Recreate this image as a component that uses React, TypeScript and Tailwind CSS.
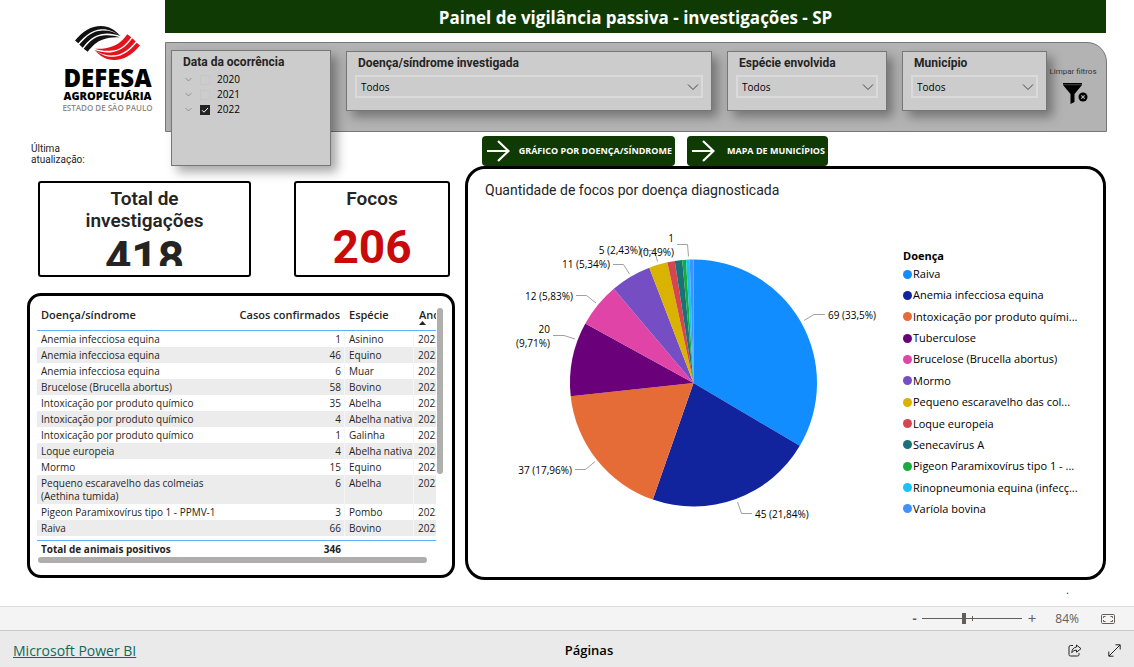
import React, { useState } from "react";

type Slice = { name: string; label: string; value: number; color: string };

const slices: Slice[] = [
  { name: "Raiva", label: "Raiva", value: 69, color: "#118DFF" },
  { name: "Anemia", label: "Anemia infecciosa equina", value: 45, color: "#12239E" },
  { name: "Intoxicação", label: "Intoxicação por produto quími...", value: 37, color: "#E66C37" },
  { name: "Tuberculose", label: "Tuberculose", value: 20, color: "#6B007B" },
  { name: "Brucelose", label: "Brucelose (Brucella abortus)", value: 12, color: "#E044A7" },
  { name: "Mormo", label: "Mormo", value: 11, color: "#744EC2" },
  { name: "Escaravelho", label: "Pequeno escaravelho das col...", value: 5, color: "#D9B300" },
  { name: "Loque", label: "Loque europeia", value: 2, color: "#D64550" },
  { name: "Senecavírus", label: "Senecavírus A", value: 2, color: "#197278" },
  { name: "Pigeon", label: "Pigeon Paramixovírus tipo 1 - ...", value: 1, color: "#1AAB40" },
  { name: "Rinopneumonia", label: "Rinopneumonia equina (infecç...", value: 1, color: "#15C6F4" },
  { name: "Varíola", label: "Varíola bovina", value: 1, color: "#4092FF" },
];

const rows: [string, number, string][] = [
  ["Anemia infecciosa equina", 1, "Asinino"],
  ["Anemia infecciosa equina", 46, "Equino"],
  ["Anemia infecciosa equina", 6, "Muar"],
  ["Brucelose (Brucella abortus)", 58, "Bovino"],
  ["Intoxicação por produto químico", 35, "Abelha"],
  ["Intoxicação por produto químico", 4, "Abelha nativa"],
  ["Intoxicação por produto químico", 1, "Galinha"],
  ["Loque europeia", 4, "Abelha nativa"],
  ["Mormo", 15, "Equino"],
  ["Pequeno escaravelho das colmeias (Aethina tumida)", 6, "Abelha"],
  ["Pigeon Paramixovírus tipo 1 - PPMV-1", 3, "Pombo"],
  ["Raiva", 66, "Bovino"],
];

function Chevron({ className }: { className: string }) {
  return (
    <svg viewBox="0 0 12 8" className={className} fill="none" stroke="currentColor" strokeWidth="1" aria-hidden="true">
      <path d="M1 1.5 6 6.5 11 1.5" />
    </svg>
  );
}

function Logo() {
  const stripes = (
    <>
      <path d="M0 14.500C8 5 16 0 26 0c8 0 14 4 19 9.500-7-4.500-12-6.800-19-6.300C17 4 10 9.500 3.300 17.300Z" />
      <path d="M4.300 18.500C12 9.500 18 5.200 26 4.700c8-.5 14 1.500 20 5.500-7-2.500-13-3.500-19-2.300-8 1.500-13.500 6-19.300 13.800Z" />
      <path d="M8.700 22.800C15 14.500 20 10.200 28 9.400c6-.6 12 0 17 1.800-7-.3-12 .3-17 2.300-7 2.500-10.500 6.200-15.300 12.300Z" />
    </>
  );
  return (
    <div className="flex flex-col items-center">
      <svg viewBox="0 0 65 34" className="h-[34px] w-[65px]" aria-hidden="true">
        <g fill="#111111">{stripes}</g>
        <g fill="#e2131d" transform="rotate(180 32.500 17)">{stripes}</g>
      </svg>
      <p className="mt-[5px] text-[24px] leading-[25px] font-extrabold text-black">DEFESA</p>
      <p className="text-[11px] leading-[12px] font-extrabold whitespace-nowrap text-black">AGROPECUÁRIA</p>
      <p className="text-[8px] leading-[11px] font-semibold whitespace-nowrap text-[#8a8a8a]">ESTADO DE SÃO PAULO</p>
    </div>
  );
}

const cardClass =
  "border border-[#777777] bg-[#cccccc] shadow-[6px_6px_10px_rgba(0,0,0,0.35)]";
const cardTitle = "font-[Roboto,sans-serif] text-[12px] leading-4 font-bold text-[#252423]";

function FilterCard({ id, title }: { id: string; title: string }) {
  return (
    <div className={`${cardClass} mt-px px-2 pt-[3px] pb-3`}>
      <label htmlFor={id} className={`${cardTitle} block px-[3px]`}>{title}</label>
      <div className="relative mt-1">
        <select
          id={id}
          className="block h-[23px] w-full appearance-none border-2 border-[#dadada] bg-transparent px-1 pt-px text-[10px] text-black"
        >
          <option>Todos</option>
        </select>
        <Chevron className="pointer-events-none absolute top-2 right-1 h-2 w-3 text-[#444444]" />
      </div>
    </div>
  );
}

function YearFilter() {
  const [checked, setChecked] = useState<Record<string, boolean>>({ "2022": true });
  return (
    <div role="group" aria-labelledby="data-titulo" className={`${cardClass} relative z-10 h-[116px] px-[11px] pt-[3px]`}>
      <p id="data-titulo" className={`${cardTitle} whitespace-nowrap`}>Data da ocorrência</p>
      <ul className="mt-[2px]">
        {["2020", "2021", "2022"].map((y) => (
          <li key={y} className="flex h-[15px] items-center">
            <button type="button" aria-label={`Expandir ${y}`} className="mr-2 ml-[2px]">
              <Chevron className="h-[5px] w-[7px] text-[#666666]" />
            </button>
            <label className="flex items-center gap-[7px] text-[10px] leading-[15px] text-black">
              <span className="relative flex size-[10px]">
                <input
                  type="checkbox"
                  checked={!!checked[y]}
                  onChange={() => setChecked({ ...checked, [y]: !checked[y] })}
                  className="size-[10px] appearance-none border border-[#c6c6c6] checked:border-[#252423] checked:bg-[#252423]"
                />
                {checked[y] && (
                  <svg viewBox="0 0 10 10" className="pointer-events-none absolute inset-0 size-[10px]" fill="none" stroke="#ffffff">
                    <path d="M2 5.200 4 7.200 8 3" />
                  </svg>
                )}
              </span>
              {y}
            </label>
          </li>
        ))}
      </ul>
    </div>
  );
}

function TabButton({ children, className }: { children: React.ReactNode; className: string }) {
  return (
    <button
      type="button"
      className={`${className} flex h-[30px] items-center justify-between rounded-[4px] bg-[#0f3a04] pr-[3px] pl-[5px] text-[9px] font-bold whitespace-nowrap text-white`}
    >
      <svg viewBox="0 0 23 22" className="h-[22px] w-[23px] shrink-0" fill="none" stroke="currentColor" strokeWidth="2.200" aria-hidden="true">
        <path d="M0 11h21M11 1l10.500 10L11 21" />
      </svg>
      {children}
    </button>
  );
}

function PieChart() {
  const cx = 208.5;
  const cy = 163;
  const r = 123.5;
  const total = slices.reduce((s, d) => s + d.value, 0);
  let acc = 0;
  const point = (v: number) => {
    const a = (v / total) * Math.PI * 2;
    return `${(cx + r * Math.sin(a)).toFixed(2)} ${(cy - r * Math.cos(a)).toFixed(2)}`;
  };
  return (
    <svg viewBox="0 0 410 330" className="h-auto w-[410px]" role="img" aria-label="Quantidade de focos por doença">
      {slices.map((s) => {
        const from = acc;
        acc += s.value;
        return (
          <path key={s.name} fill={s.color} d={`M${cx} ${cy}L${point(from)}A${r} ${r} 0 0 1 ${point(acc)}Z`} />
        );
      })}
      <g fill="none" stroke="#a0a0a0" strokeWidth="1">
        <path d="M319 100.500 329 94.500H340" />
        <path d="M252.500 282 256.500 293.500H267" />
        <path d="M110 241.500 100.500 249.500H90" />
        <path d="M90 119 79 115.500H68" />
        <path d="M111 83 101.500 75.500H91" />
        <path d="M144.500 54 138.500 44.500H128" />
        <path d="M172.500 41.500 169.500 30.500H158" />
        <path d="M203.500 36.500 202.500 24.500H192" />
      </g>
      <g fill="#000000" fontSize="10">
        <text x="343" y="99">69 (33,5%)</text>
        <text x="270" y="298">45 (21,84%)</text>
        <text x="87" y="254" textAnchor="end">37 (17,96%)</text>
        <text x="65" y="113" textAnchor="end">20</text>
        <text x="65" y="127" textAnchor="end">(9,71%)</text>
        <text x="88" y="80" textAnchor="end">12 (5,83%)</text>
        <text x="125" y="48" textAnchor="end">11 (5,34%)</text>
        <text x="156" y="34" textAnchor="end">5 (2,43%)</text>
        <text x="189" y="22" textAnchor="end">1</text>
        <text x="189" y="36" textAnchor="end">(0,49%)</text>
      </g>
    </svg>
  );
}

const headCell = "border-b border-[#5fb0ff] pt-1 font-semibold";

function CasesTable() {
  return (
    <div className="flex h-[285px] flex-col rounded-[14px] border-[3px] border-black pt-2 pr-[9px] pl-[7px]">
      <div className="relative overflow-hidden pr-[7px]">
        <div className="overflow-hidden">
          <table className="w-[450px] table-fixed border-separate border-spacing-0 text-left text-[10px] leading-[13px] text-[#252423]">
            <colgroup>
              <col className="w-[186px]" />
              <col className="w-[121px]" />
              <col className="w-[70px]" />
              <col className="w-[73px]" />
            </colgroup>
            <thead>
              <tr className="h-[27px] align-top text-[11px]">
                <th className={`${headCell} pl-1`}>Doença/síndrome</th>
                <th className={`${headCell} pr-1 text-right whitespace-nowrap`}>Casos confirmados</th>
                <th className={`${headCell} pl-[5px]`}>Espécie</th>
                <th className={`${headCell} pl-[5px]`} aria-sort="ascending">
                  Ano
                  <svg viewBox="0 0 7 4" className="h-1 w-[7px]" aria-hidden="true">
                    <path d="M0 4 3.500 0 7 4Z" fill="#252423" />
                  </svg>
                </th>
              </tr>
            </thead>
            <tbody>
              {rows.map(([d, n, e], i) => (
                <tr key={i} className="h-4 align-top even:bg-[#ececec]">
                  <td className="pt-[2px] pb-px pl-1">{d}</td>
                  <td className="pt-[2px] pr-[3px] text-right">{n}</td>
                  <td className="border-x border-[#f6f6f6] pt-[2px] pl-1 whitespace-nowrap">{e}</td>
                  <td className="pt-[2px] pl-1">2022</td>
                </tr>
              ))}
            </tbody>
            <tfoot>
              <tr className="h-1">
                <td colSpan={4} />
              </tr>
              <tr className="h-[17px] font-bold">
                <td className="border-t border-[#5fb0ff] pl-1">Total de animais positivos</td>
                <td className="border-t border-[#5fb0ff] pr-[3px] text-right">346</td>
                <td className="border-t border-[#5fb0ff]" />
                <td className="border-t border-[#5fb0ff]" />
              </tr>
            </tfoot>
          </table>
        </div>
        <div className="absolute top-1 right-0 h-[166px] w-[6px] rounded-full bg-[#b0aeac]" />
      </div>
      <div className="mr-4 ml-px h-[6px] rounded-full bg-[#b0aeac]" />
    </div>
  );
}

export default function App() {
  const [zoom, setZoom] = useState(42);
  return (
    <div className="flex min-h-screen flex-col bg-white font-['Open_Sans','Noto_Sans',sans-serif] text-[#252423]">
      <header className="flex pr-[27px]">
        <div className="w-[165px] shrink-0 pt-[26px] pl-[50px]">
          <Logo />
        </div>
        <div className="min-w-0 flex-1">
          <h1 className="mr-px flex h-[33px] items-center justify-center bg-[#0f3a04] pt-[2px] text-[17px] font-bold text-white">
            Painel de vigilância passiva - investigações - SP
          </h1>
          <div className="mt-[9px] grid h-[90px] grid-cols-[160fr_366fr_160fr_145fr_38fr] items-start gap-x-[15px] rounded-tr-[20px] border border-[#777777] bg-[#b3b3b3] pt-[7px] pr-[6px] pl-[5px]">
            <YearFilter />
            <FilterCard id="doenca" title="Doença/síndrome investigada" />
            <FilterCard id="especie" title="Espécie envolvida" />
            <FilterCard id="municipio" title="Município" />
            <button type="button" className="-ml-4 flex flex-col items-center gap-[5px] pt-4 text-[8px] leading-[12px] whitespace-nowrap text-[#333333]">
              <span className="font-[Roboto,sans-serif]">Limpar filtros</span>
              <svg viewBox="0 0 26 21" className="ml-1 h-[21px] w-[26px]" aria-hidden="true">
                <path d="M1 0h19v2l-7.500 9v8l-4 2V11L1 2Z" fill="#000000" />
                <path d="M1 1.700h19" stroke="#777777" strokeWidth=".6" />
                <circle cx="21" cy="14" r="4.500" fill="#000000" />
                <path d="m19.300 12.300 3.400 3.400m0-3.400-3.400 3.400" stroke="#b3b3b3" strokeWidth="1.200" />
              </svg>
            </button>
          </div>
        </div>
      </header>

      <main className="grid grid-cols-[428fr_641fr] gap-x-[10px] pr-7 pl-[27px]">
        <section className="min-w-0">
          <p className="h-[49px] w-[66px] pt-[11px] pl-1 font-[Roboto,sans-serif] text-[10px] leading-[11px]">
            Última atualização:
          </p>
          <div className="grid grid-cols-[213fr_156fr] gap-x-[43px] pr-[5px] pl-[11px] text-center font-[Roboto,sans-serif]">
            <div className="h-24 rounded-[3px] border-2 border-black pt-[5px]">
              <h2 className="text-[19px] leading-[22px] font-semibold">
                Total de
                <br />
                investigações
              </h2>
              <p className="mt-2 flex h-[26px] items-start justify-center overflow-hidden text-[46px] leading-[36px] font-bold">418</p>
            </div>
            <div className="h-24 rounded-[3px] border-2 border-black pt-[5px]">
              <h2 className="text-[19px] leading-[22px] font-semibold">Focos</h2>
              <p className="mt-3 text-[46px] leading-[50px] font-bold text-[#c80a0a]">206</p>
            </div>
          </div>
          <div className="mt-4">
            <CasesTable />
          </div>
        </section>

        <section className="min-w-0 pt-1">
          <nav className="flex gap-3 pl-[17px]">
            <TabButton className="w-[193px]">GRÁFICO POR DOENÇA/SÍNDROME</TabButton>
            <TabButton className="w-[141px]">MAPA DE MUNICÍPIOS</TabButton>
          </nav>
          <div className="h-[414px] rounded-[20px] border-[3px] border-black pt-[11px] pl-[17px]">
            <h2 className="font-[Roboto,sans-serif] text-[14px] leading-5">Quantidade de focos por doença diagnosticada</h2>
            <div className="mt-5 flex items-start gap-2">
              <PieChart />
              <div className="pt-7 text-[11px] leading-4 whitespace-nowrap text-black">
                <h3 className="font-bold">Doença</h3>
                <ul className="mt-[2px] flex h-[251px] flex-col justify-between">
                  {slices.map((s) => (
                    <li key={s.name} className="flex items-center gap-px">
                      <svg viewBox="0 0 9 9" className="size-[9px]" aria-hidden="true">
                        <circle cx="4.500" cy="4.500" r="4.500" fill={s.color} />
                      </svg>
                      {s.label}
                    </li>
                  ))}
                </ul>
              </div>
            </div>
          </div>
        </section>
      </main>

      <p className="mt-auto pr-[65px] text-right text-[10px] leading-[18px]">.</p>

      <div className="mt-[7px] flex h-6 items-center justify-end border-t border-[#dcdcdc] bg-[#f4f4f4] pr-[19px] text-[#605e5c]">
        <button type="button" aria-label="Reduzir" className="mr-[5px] text-[13px] font-bold">-</button>
        <div className="relative flex w-[100px] items-center">
          <input
            type="range"
            aria-label="Zoom"
            value={zoom}
            onChange={(e) => setZoom(Number(e.target.value))}
            className="h-3 w-full appearance-none bg-transparent [&::-webkit-slider-runnable-track]:h-px [&::-webkit-slider-runnable-track]:bg-[#605e5c] [&::-webkit-slider-thumb]:-mt-[5px] [&::-webkit-slider-thumb]:h-[11px] [&::-webkit-slider-thumb]:w-1 [&::-webkit-slider-thumb]:appearance-none [&::-webkit-slider-thumb]:bg-[#605e5c]"
          />
          <span className="pointer-events-none absolute left-1/2 h-[5px] w-px bg-[#605e5c]" />
        </div>
        <button type="button" aria-label="Ampliar" className="ml-[6px] text-[15px]">+</button>
        <span className="ml-[19px] text-[12px]">84%</span>
        <button type="button" aria-label="Ajustar à página" className="ml-[22px]">
          <svg viewBox="0 0 14 10" className="h-[10px] w-[14px]" fill="none" stroke="currentColor">
            <rect x=".5" y=".5" width="13" height="9" rx="1" />
            <path d="M4.500 2.500h-2v1.500M2.500 6v1.500h2M9.500 2.500h2v1.500M11.500 6v1.500h-2" />
          </svg>
        </button>
      </div>

      <footer className="grid h-[37px] grid-cols-3 items-center border-t border-[#c8c8c8] bg-[#eaeaea] pt-[3px] pr-[13px] pl-[13px] text-black">
        <a href="https://powerbi.microsoft.com" className="justify-self-start text-[14px] text-[#0b6a5a] underline">
          Microsoft Power BI
        </a>
        <span className="justify-self-center pl-11 text-[13px] font-semibold whitespace-nowrap">Páginas</span>
        <div className="flex gap-[26px] justify-self-end">
          <button type="button" aria-label="Compartilhar">
            <svg viewBox="0 0 14 13" className="h-[13px] w-[14px]" fill="none" stroke="#252423">
              <path d="M5 1.500H2.500A1.500 1.500 0 0 0 1 3v7.500A1.500 1.500 0 0 0 2.500 12H9.500a1.500 1.500 0 0 0 1.500-1.500V9" />
              <path d="M8.500 1 13 4.700 8.500 8.200V6.200C6.300 6.200 4.800 7 3.800 8.700 4 5.500 5.500 3.400 8.500 3Z" strokeLinejoin="round" />
            </svg>
          </button>
          <button type="button" aria-label="Tela cheia">
            <svg viewBox="0 0 13 13" className="size-[13px]" fill="none" stroke="#252423">
              <path d="M1 12 12 1M7.500 .8h4.700v4.700M.8 7.500v4.700h4.700" />
            </svg>
          </button>
        </div>
      </footer>
    </div>
  );
}
